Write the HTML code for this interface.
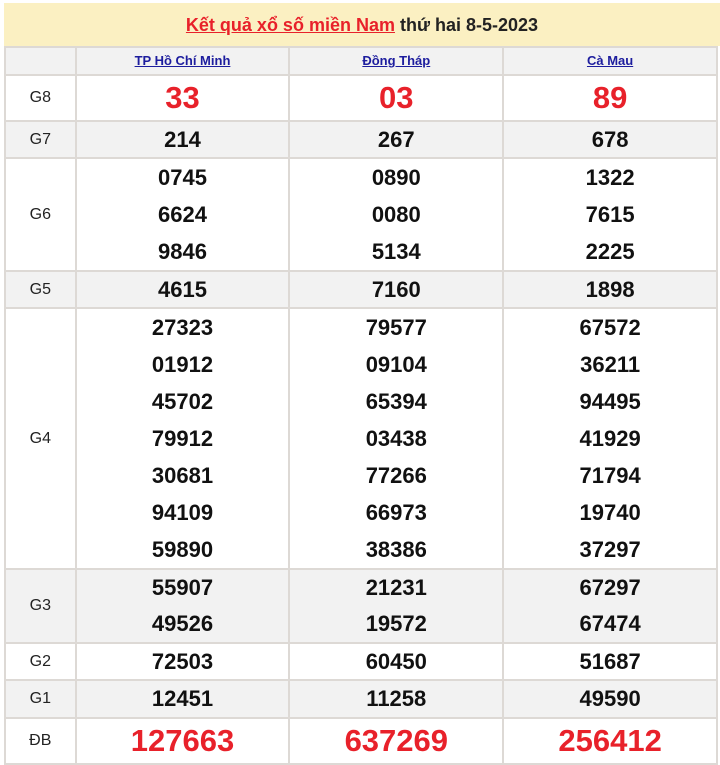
<!DOCTYPE html><html><head><style>
body{margin:0;background:#fff;font-family:"Liberation Sans",Arial,sans-serif;width:720px;height:762px;overflow:hidden}
.hd{position:absolute;left:4px;top:3px;width:716px;height:43px;background:#fbf0c2;text-align:center;line-height:44px;font-size:18px;font-weight:bold;color:#222}
.hd a{color:#e8212a;text-decoration:underline}
table{position:absolute;left:4px;top:46px;border-collapse:collapse;width:714px}
td{border:2px solid #ddd9d5;text-align:center;padding:0}
td.l{width:68px;font-size:16px;color:#222;line-height:20px}
td.c{width:210px}
tr.g td{background:#f2f2f2}
.h a{color:#1d1d9e;font-size:13px;font-weight:bold;text-decoration:underline}
.n{font-size:22px;font-weight:bold;color:#111;line-height:35px}
.s .n{line-height:35px}
.m .n{line-height:37px}
.t .n{line-height:36px}
.u .n{line-height:36px}
.r{font-size:31px;font-weight:bold;color:#e8212a;line-height:44px}
</style></head><body>
<div class="hd"><a>Kết quả xổ số miền Nam</a> thứ hai 8-5-2023</div>
<table>
<tr class="g h" style="height:28px"><td class="l"></td><td class="c"><a>TP Hồ Chí Minh</a></td><td class="c"><a>Đồng Tháp</a></td><td class="c"><a>Cà Mau</a></td></tr>
<tr><td class="l">G8</td><td class="r">33</td><td class="r">03</td><td class="r">89</td></tr>
<tr class="g s"><td class="l">G7</td><td class="n">214</td><td class="n">267</td><td class="n">678</td></tr>
<tr class="m"><td class="l">G6</td><td class="n">0745<br>6624<br>9846</td><td class="n">0890<br>0080<br>5134</td><td class="n">1322<br>7615<br>2225</td></tr>
<tr class="g s"><td class="l">G5</td><td class="n">4615</td><td class="n">7160</td><td class="n">1898</td></tr>
<tr class="m"><td class="l">G4</td><td class="n">27323<br>01912<br>45702<br>79912<br>30681<br>94109<br>59890</td><td class="n">79577<br>09104<br>65394<br>03438<br>77266<br>66973<br>38386</td><td class="n">67572<br>36211<br>94495<br>41929<br>71794<br>19740<br>37297</td></tr>
<tr class="g t"><td class="l">G3</td><td class="n">55907<br>49526</td><td class="n">21231<br>19572</td><td class="n">67297<br>67474</td></tr>
<tr class="s"><td class="l">G2</td><td class="n">72503</td><td class="n">60450</td><td class="n">51687</td></tr>
<tr class="g u"><td class="l">G1</td><td class="n">12451</td><td class="n">11258</td><td class="n">49590</td></tr>
<tr><td class="l">ĐB</td><td class="r">127663</td><td class="r">637269</td><td class="r">256412</td></tr>
</table>
</body></html>
